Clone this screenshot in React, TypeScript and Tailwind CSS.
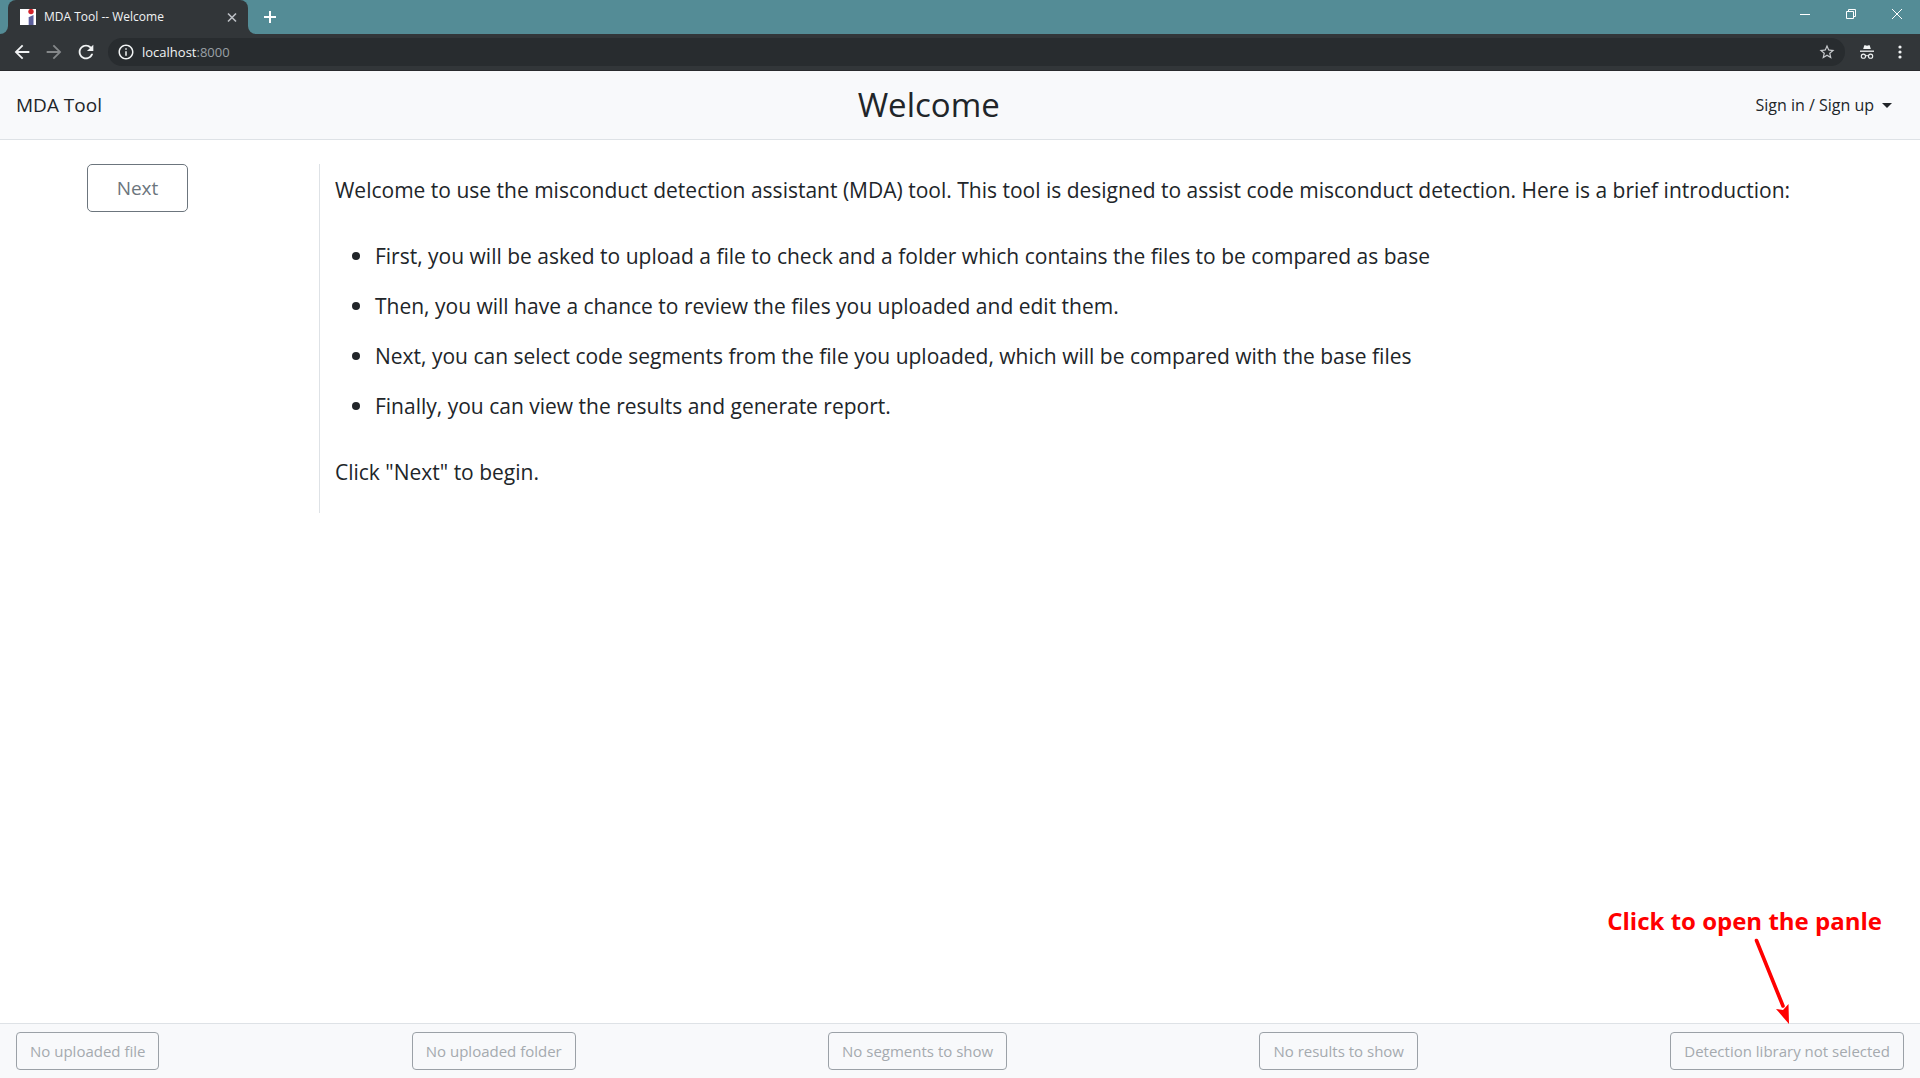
import type { ReactNode } from "react";

const steps = [
  "First, you will be asked to upload a file to check and a folder which contains the files to be compared as base",
  "Then, you will have a chance to review the files you uploaded and edit them.",
  "Next, you can select code segments from the file you uploaded, which will be compared with the base files",
  "Finally, you can view the results and generate report.",
];

const panels = [
  "No uploaded file",
  "No uploaded folder",
  "No segments to show",
  "No results to show",
];

function IconButton({ label, className, children }: { label: string; className?: string; children: ReactNode }) {
  return (
    <button type="button" aria-label={label} className={`flex shrink-0 items-center justify-center ${className ?? ""}`}>
      {children}
    </button>
  );
}

function MaterialIcon({ d, className }: { d: string; className: string }) {
  return (
    <svg viewBox="0 0 24 24" fill="currentColor" className={`shrink-0 ${className}`} aria-hidden="true">
      <path d={d} />
    </svg>
  );
}

function Favicon() {
  return (
    <svg viewBox="0 0 16 16" className="size-4 shrink-0" aria-hidden="true">
      <rect width="16" height="16" fill="#fff" />
      <path d="M8 8.500 13.500 6V16H8V12Z" fill="#5c5f9c" />
      <rect x="8" y="8" width="1" height="8" fill="#c9cbe4" />
      <circle cx="11" cy="2.600" r="2.700" fill="#d3232b" />
    </svg>
  );
}

function TabStrip() {
  return (
    <div className="flex h-[34px] items-stretch bg-[#548c96]">
      <div className="flex w-2 items-end bg-[#323639]">
        <div className="h-full w-full rounded-br-lg bg-[#548c96]" />
      </div>
      <div className="flex w-60 items-center rounded-t-lg bg-[#323639] pl-3 pr-2">
        <Favicon />
        <span className="ml-2 flex-1 text-[12px] leading-4 text-[#f1f3f4]">MDA Tool -- Welcome</span>
        <IconButton label="Close tab" className="size-4 text-[#bdc1c6]">
          <svg viewBox="0 0 16 16" className="size-4" stroke="currentColor" strokeWidth="1.600" aria-hidden="true">
            <path d="M4 4.500 12 12.500M12 4.500 4 12.500" />
          </svg>
        </IconButton>
      </div>
      <div className="w-2 bg-[#323639]">
        <div className="h-full w-full rounded-bl-lg bg-[#548c96]" />
      </div>
      <IconButton label="New tab" className="w-7 text-white">
        <svg viewBox="0 0 14 14" className="size-[14px]" stroke="currentColor" strokeWidth="2" aria-hidden="true">
          <path d="M7 1V13M1 7H13" />
        </svg>
      </IconButton>
      <div className="ml-auto flex h-7 text-white">
        <IconButton label="Minimize" className="w-[46px]">
          <svg viewBox="0 0 10 10" className="size-[10px]" stroke="currentColor" aria-hidden="true">
            <path d="M0 5.500H10" />
          </svg>
        </IconButton>
        <IconButton label="Restore" className="w-[46px]">
          <svg viewBox="0 0 10 10" className="size-[10px]" fill="none" stroke="currentColor" aria-hidden="true">
            <path d="M.5 2.500H7.500V9.500H.5ZM2.500 2.500V.5H9.500V7.500H7.500" />
          </svg>
        </IconButton>
        <IconButton label="Close" className="w-[46px]">
          <svg viewBox="0 0 10 10" className="size-[10px]" stroke="currentColor" aria-hidden="true">
            <path d="M0 0 10 10M10 0 0 10" />
          </svg>
        </IconButton>
      </div>
    </div>
  );
}

function Toolbar() {
  return (
    <div className="flex h-[37px] items-center border-b border-[#292a2d] bg-[#323639] pl-3 pr-[10px] text-[#f1f3f4]">
      <IconButton label="Back" className="size-5">
        <MaterialIcon className="size-[22px]" d="M20 11H7.830l5.590-5.590L12 4l-8 8 8 8 1.410-1.410L7.830 13H20v-2z" />
      </IconButton>
      <IconButton label="Forward" className="ml-3 size-5 text-[#85888a]">
        <MaterialIcon className="size-[22px]" d="m12 4-1.410 1.410L16.170 11H4v2h12.170l-5.580 5.590L12 20l8-8z" />
      </IconButton>
      <IconButton label="Reload" className="ml-3 size-5">
        <MaterialIcon
          className="size-[22px]"
          d="M17.65 6.35C16.2 4.9 14.21 4 12 4c-4.42 0-7.99 3.58-7.99 8s3.57 8 7.99 8c3.73 0 6.84-2.55 7.73-6h-2.08c-.82 2.33-3.04 4-5.65 4-3.31 0-6-2.69-6-6s2.69-6 6-6c1.66 0 3.14.69 4.22 1.78L13 11h7V4l-2.35 2.35z"
        />
      </IconButton>
      <div className="ml-3 flex h-7 flex-1 items-center rounded-full bg-[#282c2f] px-[9px]">
        <MaterialIcon
          className="size-[18px]"
          d="M11 7h2v2h-2zm0 4h2v6h-2zm1-9C6.48 2 2 6.48 2 12s4.48 10 10 10 10-4.48 10-10S17.52 2 12 2zm0 18c-4.41 0-8-3.59-8-8s3.59-8 8-8 8 3.59 8 8-3.59 8-8 8z"
        />
        <button type="button" className="ml-[7px] flex-1 text-left text-[13px] leading-5">
          localhost<span className="text-[#9aa0a6]">:8000</span>
        </button>
        <IconButton label="Bookmark this page" className="text-[#c8cbce]">
          <MaterialIcon
            className="size-[18px]"
            d="M22 9.24l-7.19-.62L12 2 9.19 8.63 2 9.24l5.46 4.73L5.82 21 12 17.27 18.18 21l-1.63-7.03L22 9.24zM12 15.4l-3.76 2.27 1-4.28-3.32-2.88 4.38-.38L12 6.1l1.71 4.04 4.38.38-3.32 2.88 1 4.28L12 15.4z"
          />
        </IconButton>
      </div>
      <IconButton label="Incognito" className="ml-[15px]">
        <svg viewBox="0 0 14 14" className="size-[14px]" fill="none" stroke="currentColor" aria-hidden="true">
          <path d="M4.300.3 5.200.2 7 .8 8.800.2 9.700.3 10.800 4H3.200Z" fill="currentColor" stroke="none" />
          <path d="M0 6.200H14" strokeWidth="1.300" />
          <circle cx="3.400" cy="11.200" r="2.100" strokeWidth="1.100" />
          <circle cx="10.600" cy="11.200" r="2.100" strokeWidth="1.100" />
          <path d="M5.500 11Q7 10.200 8.500 11" />
        </svg>
      </IconButton>
      <IconButton label="Menu" className="ml-4 size-5">
        <svg viewBox="0 0 4 14" className="h-[14px] w-1" fill="currentColor" aria-hidden="true">
          <circle cx="2" cy="2" r="1.600" />
          <circle cx="2" cy="7" r="1.600" />
          <circle cx="2" cy="12" r="1.600" />
        </svg>
      </IconButton>
    </div>
  );
}

export default function App() {
  return (
    <div className="flex min-h-screen flex-col bg-white font-['Open_Sans','Noto_Sans',sans-serif] text-[#212529]">
      <TabStrip />
      <Toolbar />

      <nav className="flex h-[69px] items-center justify-between border-b border-[#dee2e6] bg-[#f8f9fb] px-4">
        <a href="#" className="text-[19px] leading-7">MDA Tool</a>
        <h1 className="text-[33px] leading-10">Welcome</h1>
        <button type="button" className="mr-3 flex items-center gap-2 text-[16px] leading-6">
          Sign in / Sign up
          <svg viewBox="0 0 10 5" className="h-[5px] w-[10px]" fill="currentColor" aria-hidden="true">
            <path d="M0 0H10L5 5Z" />
          </svg>
        </button>
      </nav>

      <main className="flex flex-1 items-start pt-6">
        <div className="flex w-1/6 shrink-0 justify-center pr-[45px]">
          <button type="button" className="h-12 w-[101px] rounded-[5px] border border-[#6c757d] text-[19px] leading-7 text-[#6c757d]">
            Next
          </button>
        </div>
        <section className="-ml-px flex-1 border-l border-[#dee2e6] pb-6 pl-[15px] pt-[9px] text-[21px] leading-[34px]">
          <p>Welcome to use the misconduct detection assistant (MDA) tool. This tool is designed to assist code misconduct detection. Here is a brief introduction:</p>
          <ul className="my-8 flex flex-col gap-4 pl-[17px]">
            {steps.map((step) => (
              <li
                key={step}
                className="flex items-center gap-[15px] before:size-2 before:shrink-0 before:rounded-full before:bg-current before:content-['']"
              >
                {step}
              </li>
            ))}
          </ul>
          <p>Click "Next" to begin.</p>
        </section>
      </main>

      <footer className="flex h-[55px] items-center justify-between border-t border-[#dee2e6] bg-[#f8f9fb] px-4 text-[15px] leading-6 text-[#a5aaaf]">
        {panels.map((panel) => (
          <button key={panel} type="button" className="h-[38px] rounded border border-[#9ba1a7] px-[13px]">
            {panel}
          </button>
        ))}
        <div className="relative">
          <button type="button" className="h-[38px] rounded border border-[#9ba1a7] px-[13px]">
            Detection library not selected
          </button>
          <div className="pointer-events-none absolute bottom-full right-[22px] mb-2 flex flex-col whitespace-nowrap">
            <span className="text-[24px] font-bold leading-[30px] text-[#ff0000]">Click to open the panle</span>
            <svg viewBox="0 0 40 88" className="ml-[145px] h-[88px] w-10" aria-hidden="true">
              <path d="M4.500 4.500 31 70" stroke="#f00" strokeWidth="3.600" strokeLinecap="round" />
              <path d="M37 88 24 73 31 74 36.500 68Z" fill="#f00" />
            </svg>
          </div>
        </div>
      </footer>
    </div>
  );
}
